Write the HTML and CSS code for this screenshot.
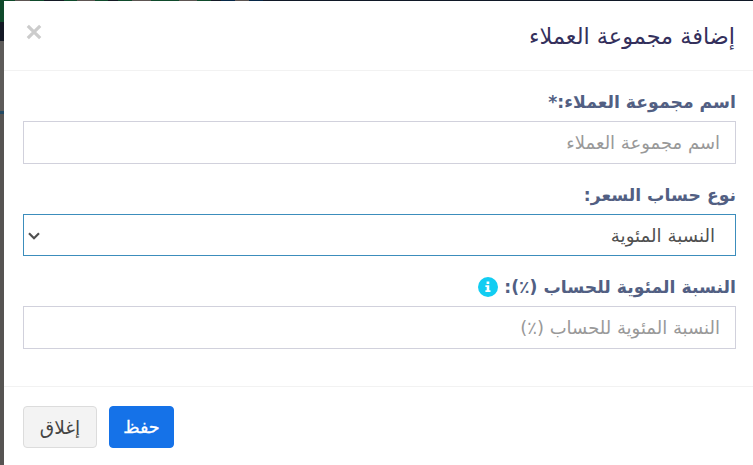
FILE: index.html
```
<!DOCTYPE html>
<html lang="ar" dir="rtl">
<head>
<meta charset="utf-8">
<title>إضافة مجموعة العملاء</title>
<link rel="stylesheet" href="styles.css">
</head>
<body>
<form class="modal">
  <header class="modal-header">
    <h1 class="title">إضافة مجموعة العملاء</h1>
    <button type="button" class="close" aria-label="إغلاق"><svg width="16" height="16" viewBox="0 0 16 16"><path d="M1.8 1.8 14.2 14.2M14.2 1.8 1.8 14.2"/></svg></button>
  </header>
  <main class="modal-body">
    <div class="group">
      <label class="label">اسم مجموعة العملاء:*</label>
      <div class="control placeholder">اسم مجموعة العملاء</div>
    </div>
    <div class="group">
      <label class="label">نوع حساب السعر:</label>
      <div class="control select"><span>النسبة المئوية</span><svg class="chevron" width="12" height="8" viewBox="0 0 12 8"><path d="M1 1.2 6 6.2 11 1.2"/></svg></div>
    </div>
    <div class="group">
      <label class="label">النسبة المئوية للحساب (٪): <svg class="info" width="20" height="20" viewBox="0 0 20 20"><circle cx="10" cy="10" r="10"/><path d="M8.6 4.6h2.7v2.4H8.6zM7.4 8.2h3.9v5h1.2v1.9H7.4v-1.9h1.3V10H7.4z"/></svg></label>
      <div class="control placeholder">النسبة المئوية للحساب (٪)</div>
    </div>
  </main>
  <footer class="modal-footer">
    <button type="button" class="btn primary">حفظ</button>
    <button type="button" class="btn">إغلاق</button>
  </footer>
</form>
</body>
</html>
```
FILE: styles.css
```
* { box-sizing: border-box; }
body {
  margin: 0;
  height: 465px;
  overflow: hidden;
  padding: 1px 0 0 4px;
  font-family: "DejaVu Sans", sans-serif;
  background:
    linear-gradient(90deg, #0f4a2b 0 15px, #5d5552 15px 30px, #0f4a2b 30px 44px, #141925 44px 64px, #0f4a2b 64px 77px, #5d5552 77px 95px, #0f4a2b 95px 108px, #141925 108px 118px, #0f4a2b 118px 132px, #5d5552 132px 151px, #0f4a2b 151px 179px, #5d5552 179px 197px, #0f4a2b 197px 211px, #141925 211px 221px, #062747 221px 235px, #5d5552 235px 249px, #062747 249px 263px, #101827 263px) 0 0 / 100% 1px no-repeat,
    linear-gradient(#0f4a2b 0 22px, #141925 22px 41px, #5d5b59 41px 111px, #234a63 111px 114px, #565452 114px);
}
.modal { height: 464px; background: #fff; }
.modal-header {
  height: 70px;
  display: flex;
  justify-content: space-between;
  align-items: flex-start;
  padding: 22px 18px 0 22px;
  border-bottom: 1px solid #f2f2f2;
}
.title { margin: 0; font-size: 22.4px; line-height: 26px; font-weight: 400; color: #34305c; }
.close { display: block; margin-top: 1px; padding: 0; border: 0; background: none; line-height: 0; }
.close path { fill: none; stroke: #ccc; stroke-width: 3.2; }
.modal-body { height: 315px; padding: 18px 17px 0 19px; }
.group { height: 92.5px; }
.label {
  display: flex;
  align-items: center;
  gap: 6px;
  height: 26px;
  margin-bottom: 6px;
  font-size: 17.25px;
  font-weight: 700;
  color: #525f83;
}
.info circle { fill: #12cdf2; }
.info path { fill: #fff; }
.control {
  height: 43px;
  display: flex;
  align-items: center;
  justify-content: space-between;
  padding: 0 15px;
  border: 1px solid #d1d1dc;
  font-size: 18px;
}
.placeholder { color: #999; }
.select { height: 42px; padding: 2px 20px 0 4px; border-color: #3c8dbc; color: #505050; font-size: 18.2px; }
.chevron path { fill: none; stroke: #505050; stroke-width: 2.2; }
.modal-footer {
  display: flex;
  justify-content: flex-end;
  gap: 12px;
  padding: 19px;
  border-top: 1px solid #f2f2f2;
}
.btn {
  width: 74px;
  height: 42px;
  padding: 0;
  border: 1px solid #dcdcdc;
  border-radius: 4px;
  background: #f3f3f3;
  color: #444;
  font: 18.6px "DejaVu Sans", sans-serif;
}
.primary { width: 65px; border-color: #1572e8; background: #1572e8; color: #fff; font-size: 17.6px; -webkit-text-stroke: .3px #fff; }
```
